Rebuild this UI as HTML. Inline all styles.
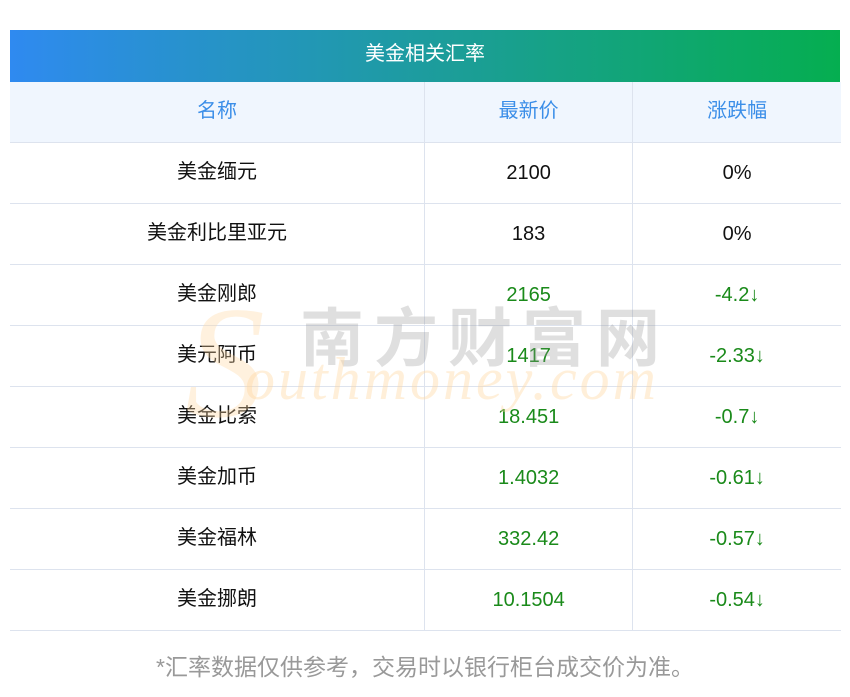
<!DOCTYPE html>
<html><head><meta charset="utf-8"><style>
body{margin:0;background:#fff;width:850px;height:697px;position:relative;font-family:"Liberation Sans","Noto Sans CJK SC",sans-serif;overflow:hidden}
.title{position:absolute;left:10px;top:30px;width:830px;height:52px;background:linear-gradient(90deg,#2f8af0,#1b9e96 55%,#05ae50);color:#fff;font-size:20px;line-height:48px;text-align:center}
table{position:absolute;left:10px;top:82px;width:831px;border-collapse:collapse;font-size:20px}
td{border-bottom:1px solid #dde3ee;border-right:1px solid #dde3ee;height:60px;text-align:center;padding:0;color:#111}
td:last-child{border-right:none}
tr.h td{background:#f0f6fe;color:#3b8ee8}
.g{color:#1a8a1a}
td span{position:relative;top:-4px}
td.n{position:relative;top:-1px}
.foot{position:absolute;left:0;width:850px;top:648px;text-align:center;color:#999;font-size:23px}
.wm{position:absolute;pointer-events:none;white-space:nowrap}
</style></head><body>
<div class="title">美金相关汇率</div>
<table>
<colgroup><col style="width:414px"><col style="width:208px"><col style="width:208px"></colgroup>
<tr class="h"><td><span>名称</span></td><td><span>最新价</span></td><td><span>涨跌幅</span></td></tr>
<tr><td><span>美金缅元</span></td><td>2100</td><td>0%</td></tr>
<tr><td><span>美金利比里亚元</span></td><td>183</td><td>0%</td></tr>
<tr><td><span>美金刚郎</span></td><td class="g">2165</td><td class="g">-4.2↓</td></tr>
<tr><td><span>美元阿币</span></td><td class="g">1417</td><td class="g">-2.33↓</td></tr>
<tr><td><span>美金比索</span></td><td class="g">18.451</td><td class="g">-0.7↓</td></tr>
<tr><td><span>美金加币</span></td><td class="g">1.4032</td><td class="g">-0.61↓</td></tr>
<tr><td><span>美金福林</span></td><td class="g">332.42</td><td class="g">-0.57↓</td></tr>
<tr><td><span>美金挪朗</span></td><td class="g">10.1504</td><td class="g">-0.54↓</td></tr>
</table>
<div class="wm" style="left:185px;top:270px;font-size:160px;font-style:italic;font-family:'Liberation Serif',serif;color:rgba(255,215,160,0.35)">S</div>
<div class="wm" style="left:300px;top:288px;font-size:64px;color:rgba(150,150,150,0.3);letter-spacing:10px;font-weight:bold">南方财富网</div>
<div class="wm" style="left:245px;top:345px;font-size:60px;font-style:italic;font-family:'Liberation Serif',serif;color:rgba(255,215,160,0.4);letter-spacing:3px">outhmoney.com</div>
<div class="foot">*汇率数据仅供参考，交易时以银行柜台成交价为准。</div>
</body></html>
